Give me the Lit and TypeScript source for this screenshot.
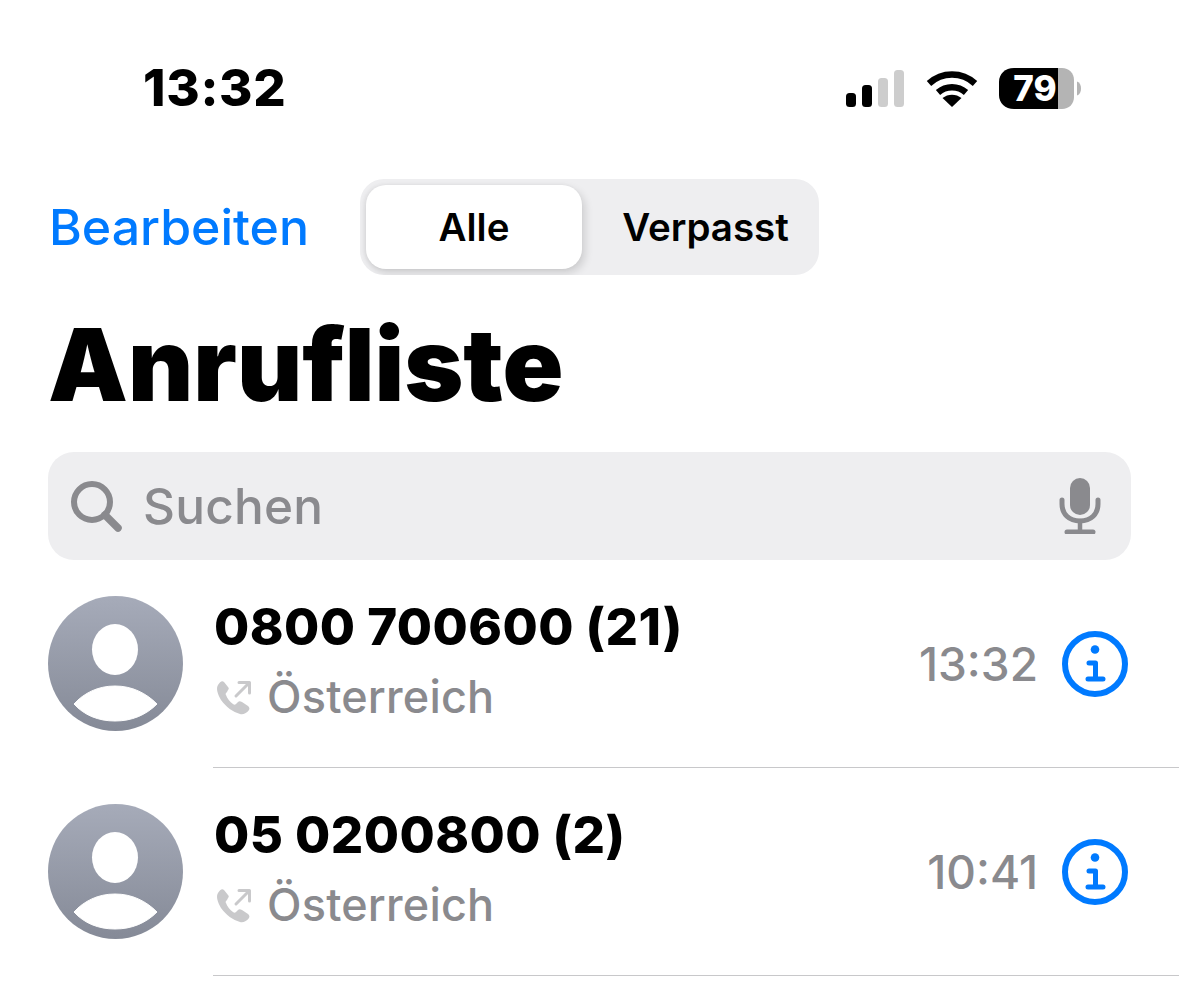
import { LitElement, html, css, svg } from "lit";
import { customElement } from "lit/decorators.js";

const rows = [
  { name: "0800 700600 (21)", time: "13:32" },
  { name: "05 0200800 (2)", time: "10:41" },
];

@customElement("app-root")
export class AppRoot extends LitElement {
  static styles = css`
    :host { display: block; width: 1179px; height: 983px; overflow: hidden; background: #fff; font-family: Inter, "Liberation Sans", sans-serif; color: #000; }
    .status { height: 179px; box-sizing: border-box; padding: 63px 97px 0 143px; display: flex; justify-content: space-between; align-items: flex-start; }
    .clock { font-size: 51px; font-weight: 800; line-height: 50px; letter-spacing: 0.7px; }
    .indicators { display: flex; align-items: center; gap: 21px; padding-top: 5px; }
    .indicators svg { display: block; }
    .battery { position: relative; width: 83px; height: 41px; }
    .battery-num { position: absolute; left: 12px; top: 0; width: 48px; text-align: center; font-size: 35px; font-weight: 800; line-height: 41px; color: #fff; white-space: nowrap; }
    .nav { display: flex; align-items: center; height: 96px; padding-left: 49px; gap: 54px; }
    .edit { color: #007aff; font-size: 50px; font-weight: 500; letter-spacing: 0; width: 257px; white-space: nowrap; }
    .seg { width: 459px; height: 96px; box-sizing: border-box; padding: 6px; border-radius: 24px; background: #eeeef0; display: flex; align-items: stretch; overflow: hidden; }
    .seg-item { display: flex; align-items: center; justify-content: center; font-size: 38.500px; font-weight: 600; letter-spacing: 0; }
    .seg-on { width: 216px; background: #fff; border-radius: 20px; box-shadow: 3px 4px 9px rgba(0,0,0,.14), -2px 0 4px rgba(0,0,0,.06); }
    .seg-off { flex: 1; padding-left: 16px; }
    .title { margin: 40px 0 0 48px; font-size: 100.600px; line-height: 100px; font-weight: 900; letter-spacing: 0; }
    .search { margin: 37px 48px 0; height: 108px; border-radius: 26px; background: #eeeef0; display: flex; align-items: center; padding: 0 30px 0 22px; gap: 21px; color: #8a8a8e; font-size: 49.500px; font-weight: 500; letter-spacing: 0.2px; }
    .search span { flex: 1; }
    .search svg { display: block; }
    .list { margin-top: 36px; }
    .row { height: 208px; box-sizing: border-box; padding-left: 48px; display: flex; align-items: flex-start; }
    .avatar { width: 135px; height: 135px; flex: none; display: block; }
    .body { height: 172px; box-sizing: border-box; flex: 1; margin-left: 30px; display: flex; align-items: flex-start; border-bottom: 1.5px solid #c8c8ca; }
    .text { flex: 1; }
    .name { font-size: 51px; font-weight: 800; line-height: 60px; margin-top: 1px; margin-left: 1px; letter-spacing: 0.45px; white-space: nowrap; }
    .sub { display: flex; align-items: center; gap: 16px; margin-top: 10px; margin-left: 2px; color: #8a8a8e; font-size: 45px; font-weight: 500; line-height: 60px; letter-spacing: 0.2px; }
    .sub svg { display: block; }
    .right { display: flex; align-items: center; height: 135px; padding-right: 51px; gap: 24px; }
    .time { font-size: 46px; font-weight: 500; color: #8a8a8e; text-align: right; white-space: nowrap; }
    .info { display: block; }
  `;

  private avatar(i: number) {
    return html`<svg class="avatar" viewBox="0 0 135 135">
      <defs><linearGradient id="g${i}" x1="0" y1="0" x2="0" y2="1"><stop offset="0" stop-color="#a6abb9"/><stop offset="1" stop-color="#858a97"/></linearGradient></defs>
      <circle cx="67.5" cy="67.5" r="67.5" fill="url(#g${i})"/>
      <ellipse cx="67" cy="53.500" rx="23" ry="25.500" fill="#fff"/>
      <path d="M26 108C36 97 50 90 67 90S98 97 109 108C98 119 84 125 67 125S36 119 26 108Z" fill="#fff" stroke="#fff" stroke-width="1" stroke-linejoin="round"/>
    </svg>`;
  }

  private phone() {
    return html`<svg width="36" height="36" viewBox="0 0 36 36" fill="#c9c9cb">
      ${svg`<path d="M3 6C1 9 2 14 6 21C11 28 18 33 25 35C28 36 32 34 34 31C35 29 34 28 33 27L27 23C25 22 24 22 23 23L21 25C20 26 19 26 18 25C15 23 12 19 11 16C10 15 11 14 12 13L13 11C14 10 14 9 13 8L9 3C7 1 5 3 3 6Z"/>
      <path d="M21 17L33 5M24 3.500H34.500V14" fill="none" stroke="#c9c9cb" stroke-width="3" stroke-linecap="round" stroke-linejoin="round"/>`}
    </svg>`;
  }

  private info() {
    return html`<svg class="info" width="66" height="66" viewBox="0 0 66 66" fill="none">
      <circle cx="33" cy="33" r="30" stroke="#007aff" stroke-width="6"/>
      <circle cx="33" cy="18.500" r="4.300" fill="#007aff"/>
      <path d="M27 32H33.500V48M26 48H41" stroke="#007aff" stroke-width="5" stroke-linecap="round" stroke-linejoin="round"/>
    </svg>`;
  }

  render() {
    return html`
      <div class="status">
        <div class="clock">13:32</div>
        <div class="indicators">
          <svg width="59" height="38" viewBox="0 0 59 38">
            <rect x="0" y="23" width="10" height="14" rx="3.500" fill="#000"/>
            <rect x="16" y="15" width="10" height="22" rx="3.500" fill="#000"/>
            <rect x="32" y="8" width="10" height="29" rx="3.500" fill="#cdcdcd"/>
            <rect x="48" y="0" width="10" height="37" rx="3.500" fill="#cdcdcd"/>
          </svg>
          <svg width="52" height="38" viewBox="0 0 52 38" fill="none" stroke="#000" stroke-width="6.500">
            <path d="M3 13.500C16 1.500 36 1.500 49 13.500"/>
            <path d="M12 22.500C20 15.500 32 15.500 40 22.500"/>
            <path d="M26 37L16.500 28C22 23.500 30 23.500 35.500 28Z" fill="#000" stroke="none"/>
          </svg>
          <div class="battery">
            <svg width="83" height="41" viewBox="0 0 83 41">
              <path d="M59 0H63C70 0 75 5 75 12V29C75 36 70 41 63 41H59Z" fill="#b4b4b4"/>
              <path d="M78 13.500C81 14.500 82 17.500 82 20.500S81 26.500 78 27.500Z" fill="#b4b4b4"/>
              <path d="M15 0H59V41H15C6 41 0 35 0 27V14C0 6 6 0 15 0Z" fill="#000"/>
            </svg>
            <div class="battery-num">79</div>
          </div>
        </div>
      </div>
      <div class="nav">
        <div class="edit">Bearbeiten</div>
        <div class="seg">
          <div class="seg-item seg-on">Alle</div>
          <div class="seg-item seg-off">Verpasst</div>
        </div>
      </div>
      <div class="title">Anrufliste</div>
      <div class="search">
        <svg width="52" height="52" viewBox="0 0 52 52" fill="none" stroke="#8a8a8e" stroke-width="6" stroke-linecap="round">
          <circle cx="22" cy="22" r="18"/><path d="M35 35L48 48" stroke-width="7.500"/>
        </svg>
        <span>Suchen</span>
        <svg width="42" height="56" viewBox="0 0 42 56" fill="none" stroke="#8a8a8e" stroke-linecap="round">
          <rect x="11" y="0" width="20" height="37" rx="10" fill="#8a8a8e" stroke="none"/>
          <path d="M3 22V26C3 36 10 43 21 43S39 36 39 26V22" stroke-width="5"/>
          <path d="M21 43V53" stroke-width="4.500"/>
          <path d="M8 54H34" stroke-width="5"/>
        </svg>
      </div>
      <div class="list">
        ${rows.map((r, i) => html`
          <div class="row">
            ${this.avatar(i)}
            <div class="body">
              <div class="text">
                <div class="name">${r.name}</div>
                <div class="sub">${this.phone()}<span>Österreich</span></div>
              </div>
              <div class="right">
                <div class="time">${r.time}</div>
                ${this.info()}
              </div>
            </div>
          </div>`)}
      </div>
    `;
  }
}
